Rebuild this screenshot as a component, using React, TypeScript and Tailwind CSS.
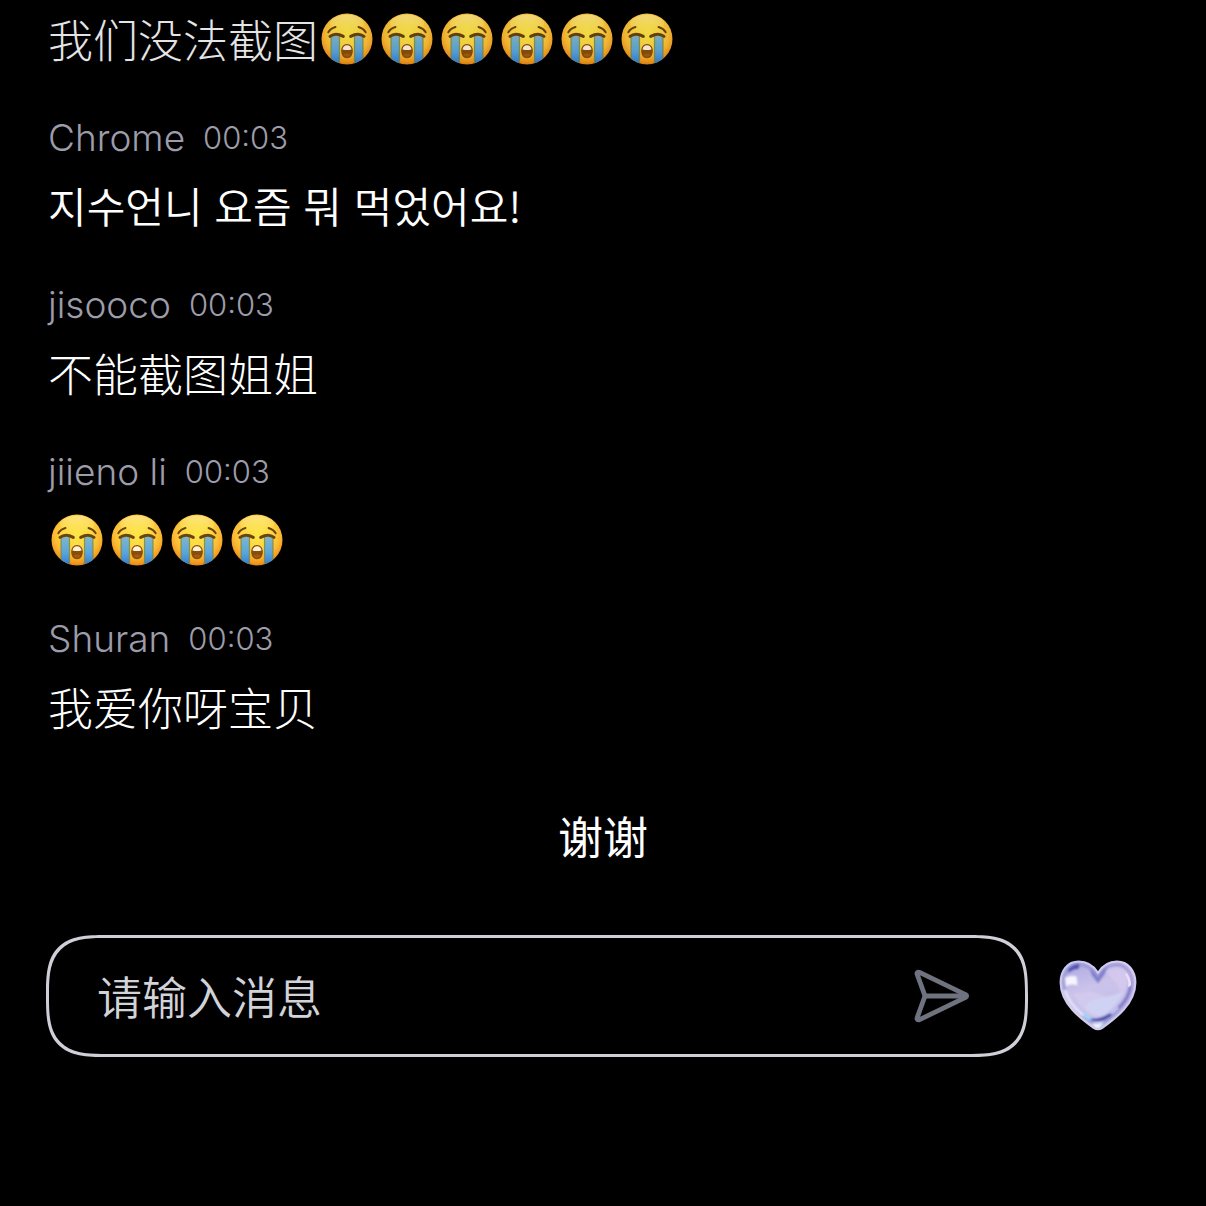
import { useState } from "react";

type Part = { kind: "text"; value: string } | { kind: "sob"; count: number };

type Message = {
  id: number;
  author?: string;
  time?: string;
  parts: Part[];
  lang: "zh" | "ko";
  faded?: boolean;
};

const messages: Message[] = [
  {
    id: 1,
    lang: "zh",
    faded: true,
    parts: [
      { kind: "text", value: "我们没法截图" },
      { kind: "sob", count: 6 },
    ],
  },
  { id: 2, author: "Chrome", time: "00:03", lang: "ko", parts: [{ kind: "text", value: "지수언니 요즘 뭐 먹었어요!" }] },
  { id: 3, author: "jisooco", time: "00:03", lang: "zh", parts: [{ kind: "text", value: "不能截图姐姐" }] },
  { id: 4, author: "jiieno li", time: "00:03", lang: "zh", parts: [{ kind: "sob", count: 4 }] },
  { id: 5, author: "Shuran", time: "00:03", lang: "zh", parts: [{ kind: "text", value: "我爱你呀宝贝" }] },
];

function EmojiDefs() {
  return (
    <svg className="absolute h-0 w-0" aria-hidden="true">
      <defs>
        <radialGradient id="sob-face" cx="0.5" cy="0.38" r="0.64">
          <stop offset="0" stopColor="#fde647" />
          <stop offset="0.45" stopColor="#fdd742" />
          <stop offset="0.72" stopColor="#fbb832" />
          <stop offset="0.9" stopColor="#f0961c" />
          <stop offset="1" stopColor="#d97c10" />
        </radialGradient>
        <linearGradient id="sob-shine" x1="0" y1="0" x2="0" y2="1">
          <stop offset="0" stopColor="#fff0b0" stopOpacity="0.6" />
          <stop offset="1" stopColor="#fff27a" stopOpacity="0" />
        </linearGradient>
        <linearGradient id="sob-tear" x1="0" y1="0" x2="0" y2="1">
          <stop offset="0" stopColor="#7fb6c8" />
          <stop offset="0.5" stopColor="#5aa6dc" />
          <stop offset="1" stopColor="#2a72cb" />
        </linearGradient>
        <clipPath id="sob-clip">
          <circle cx="29" cy="30" r="25.5" />
        </clipPath>
      </defs>
    </svg>
  );
}

function SobFace() {
  return (
    <svg viewBox="0 0 60 60" className="h-15 w-15 shrink-0" role="img" aria-label="😭">
      <circle cx="29" cy="30" r="25.5" fill="url(#sob-face)" />
      <ellipse cx="29" cy="14.5" rx="17" ry="9" fill="url(#sob-shine)" />
      <g clipPath="url(#sob-clip)">
        <path d="M13 27h8.500v31H13ZM36.500 27H45v31h-8.500Z" fill="url(#sob-tear)" />
        <path d="M13 27v28M21.500 27v28M36.500 27v28M45 27v28" stroke="#7f8434" strokeOpacity="0.8" strokeWidth="1.2" />
      </g>
      <g fill="none" stroke="#6b430c" strokeLinecap="round">
        <path d="M12 27.400Q17.500 23 25.300 27.400" strokeWidth="3" />
        <path d="M46 27.400Q40.500 23 32.700 27.400" strokeWidth="3" />
        <path d="M10.300 23.300Q12.500 19.400 17.500 18" strokeWidth="1.9" />
        <path d="M47.700 23.300Q45.500 19.400 40.500 18" strokeWidth="1.9" />
      </g>
      <path d="M29 35c-3.700 0-5.800 2.900-5.800 7s2.100 7.200 5.800 7.200 5.800-3.100 5.800-7.200-2.100-7-5.800-7Z" fill="#8a4d09" />
      <path d="M29 36.300c-2.700 0-4.200 1.700-4.500 4.200q4.500 1.200 9 0c-.3-2.500-1.800-4.200-4.500-4.200Z" fill="#fff3dc" />
      <path d="M25.500 45.300q3.500-1.400 7 0-1 2.800-3.500 2.800t-3.500-2.800Z" fill="#a05c0e" />
    </svg>
  );
}

function SendIcon() {
  return (
    <svg
      viewBox="0 0 60 60"
      className="h-15 w-15"
      fill="none"
      stroke="#6f737f"
      strokeWidth="4.8"
      strokeLinecap="round"
      strokeLinejoin="round"
      aria-hidden="true"
    >
      <path d="M4.200 8.400C3.500 6.500 5 5.600 6.600 6.400L52.600 28.600Q54.800 30 52.600 31.400L6.600 53.600C5 54.400 3.500 53.500 4.200 51.600L12 30Z" />
      <path d="M12 30H52" />
    </svg>
  );
}

function HeartIcon() {
  return (
    <svg viewBox="0 0 80 74" className="h-18 w-20" aria-hidden="true">
      <defs>
        <linearGradient id="heart-body" x1="0.2" y1="0" x2="0.6" y2="1">
          <stop offset="0" stopColor="#aaa9e0" />
          <stop offset="0.4" stopColor="#cbc3ea" />
          <stop offset="0.75" stopColor="#c3bfea" />
          <stop offset="1" stopColor="#b0c8f0" />
        </linearGradient>
        <linearGradient id="heart-rim" x1="0" y1="0" x2="1" y2="1">
          <stop offset="0" stopColor="#c3c8ef" />
          <stop offset="0.5" stopColor="#dccff0" />
          <stop offset="1" stopColor="#c8c1e8" />
        </linearGradient>
        <filter id="heart-soft" x="-20%" y="-20%" width="140%" height="140%">
          <feGaussianBlur stdDeviation="0.9" />
        </filter>
        <clipPath id="heart-clip">
          <path d="M40 13C34.500 4 27 1.500 20 1.500 8.500 1.500 1.500 11 1.500 23c0 22 21 37.500 34 46.800q4.500 3 9 0C57.500 60.500 78.500 45 78.500 23 78.500 11 71 1.500 59.500 1.500 52 1.500 45.500 4 40 13Z" />
        </clipPath>
      </defs>
      <g clipPath="url(#heart-clip)">
        <rect width="80" height="74" fill="url(#heart-body)" />
        <g filter="url(#heart-soft)">
          <path d="M40 17C34 7 27 5 20 5 10 5 5 14 5 23c0 19 18 34 31 43q4 3 8 0c13-9 31-24 31-43 0-9-6-18-16-18-8 0-13 3-19 12Z" fill="none" stroke="#9793d4" strokeWidth="2.2" />
          <path d="M15 34c8 2 17-4 26 1s19 2 27-4c-4 11-14 21-24 28-5 1-12-1-18-7-5-5-9-11-11-18Z" fill="#d5cdef" opacity="0.7" />
          <path d="M26 49c5-8 13-9 21-10 6-1 12-5 18-6-5 11-12 19-21 24-6 0-13-3-18-8Z" fill="#cfd5f5" opacity="0.8" />
          <path d="M48 12c9-7 19-5 23 4 0 9-3 15-7 19-2-10-8-14-16-23Z" fill="#d9caf0" opacity="0.7" />
          <path d="M9 10q5-6 12-6l-1 5q-6 0-10 4Z" fill="#5150ad" />
          <path d="M31 8q5 4 9 11 4-8 10-12l-3 7-7 10-6-8Z" fill="#7d7ccb" />
          <path d="M30 60q9 2 22-5l3 1q-7 7-16 7-6 0-9-3Z" fill="#4f50aa" />
          <path d="M61 49q10-9 12-22" fill="none" stroke="#8079c6" strokeWidth="2.5" />
          <path d="M6 31q4 14 19 26" fill="none" stroke="#e8ebfb" strokeWidth="2.5" />
          <path d="M25 56l6 1 2 6-7-4Z" fill="#98dcfa" />
          <path d="M33 65q7 2 13-1l-5 6h-3Z" fill="#f1f7ff" />
          <path d="M6 18q7-3 12-1l1 9q-7-2-12 1Z" fill="#f6f4fd" />
        </g>
        <path d="M69 13q5 5 5 13l-3 2q1-8-3-13Z" fill="#eee0f8" />
      </g>
      <path
        d="M40 13C34.500 4 27 1.500 20 1.500 8.500 1.500 1.500 11 1.500 23c0 22 21 37.500 34 46.800q4.500 3 9 0C57.500 60.500 78.500 45 78.500 23 78.500 11 71 1.500 59.500 1.500 52 1.500 45.500 4 40 13Z"
        fill="none"
        stroke="url(#heart-rim)"
        strokeWidth="2"
      />
    </svg>
  );
}

function ChatMessage({ message }: { message: Message }) {
  const textClass =
    message.lang === "ko"
      ? "pb-1.5 text-[42px] font-[350] font-['Noto_Sans_CJK_KR',sans-serif]"
      : "pb-0.5 text-[45px] font-light font-['Noto_Sans_CJK_SC',sans-serif]";

  return (
    <li>
      {message.author && (
        <div className="mb-3 flex h-[50px] items-center gap-[18px] font-light text-[#9c9caa]">
          <span className="text-[37px]">{message.author}</span>
          <time className="text-[31px]">{message.time}</time>
        </div>
      )}
      <p
        lang={message.lang}
        className={`flex h-16 items-center ${textClass} ${message.faded ? "text-[#e4e4e4]" : "text-white"}`}
      >
        {message.parts.map((part, i) =>
          part.kind === "text" ? (
            <span key={i}>{part.value}</span>
          ) : (
            <span key={i} className={`flex ${message.faded ? "opacity-95" : ""}`}>
              {Array.from({ length: part.count }, (_, n) => (
                <SobFace key={n} />
              ))}
            </span>
          ),
        )}
      </p>
    </li>
  );
}

export default function App() {
  const [draft, setDraft] = useState("");

  return (
    <main className="min-h-screen bg-black pt-2 font-[Inter,sans-serif] text-white">
      <EmojiDefs />
      <ul className="flex flex-col gap-[41px] px-12">
        {messages.map((message) => (
          <ChatMessage key={message.id} message={message} />
        ))}
      </ul>

      <p lang="zh" className="mt-16 flex h-16 items-center justify-center font-['Noto_Sans_CJK_SC',sans-serif] text-[45px]">
        谢谢
      </p>

      <form
        className="mt-[67px] flex items-center gap-[30px] pr-17 pl-[46px]"
        onSubmit={(e) => {
          e.preventDefault();
          setDraft("");
        }}
      >
        <div className="flex h-[122px] min-w-0 flex-1 items-center rounded-[42px] border-3 border-[#d0ced8] pr-13 pl-12 supports-[corner-shape:squircle]:rounded-[60px] supports-[corner-shape:squircle]:[corner-shape:superellipse(1.6)]">
          <input
            type="text"
            lang="zh"
            aria-label="请输入消息"
            placeholder="请输入消息"
            value={draft}
            onChange={(e) => setDraft(e.target.value)}
            className="h-16 min-w-0 flex-1 bg-transparent font-['Noto_Sans_CJK_SC',sans-serif] text-[45px] font-[350] outline-none placeholder:text-[#d2d2d9]"
          />
          <button type="submit" aria-label="发送" className="shrink-0">
            <SendIcon />
          </button>
        </div>
        <button type="button" aria-label="点赞" className="shrink-0">
          <HeartIcon />
        </button>
      </form>
    </main>
  );
}
